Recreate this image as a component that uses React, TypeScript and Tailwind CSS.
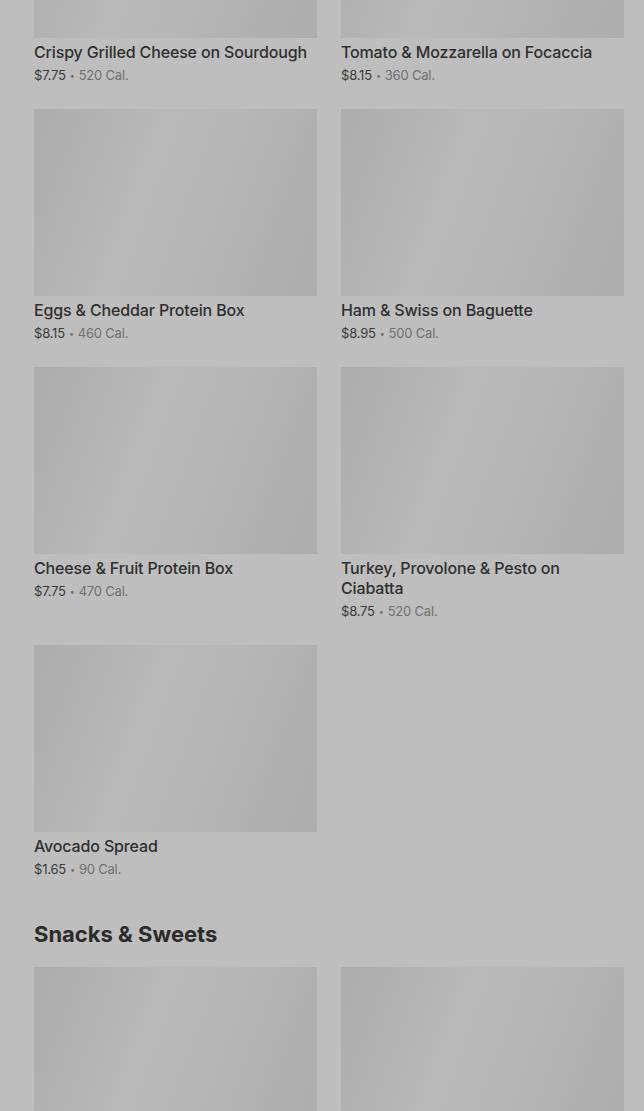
type Item = {
  name: string;
  price: string;
  cal: string;
};

const breakfast: Item[] = [
  { name: "Crispy Grilled Cheese on Sourdough", price: "$7.75", cal: "520 Cal." },
  { name: "Tomato & Mozzarella on Focaccia", price: "$8.15", cal: "360 Cal." },
  { name: "Eggs & Cheddar Protein Box", price: "$8.15", cal: "460 Cal." },
  { name: "Ham & Swiss on Baguette", price: "$8.95", cal: "500 Cal." },
  { name: "Cheese & Fruit Protein Box", price: "$7.75", cal: "470 Cal." },
  { name: "Turkey, Provolone & Pesto on Ciabatta", price: "$8.75", cal: "520 Cal." },
  { name: "Avocado Spread", price: "$1.65", cal: "90 Cal." },
];

const snacks: Item[] = [
  { name: "", price: "", cal: "" },
  { name: "", price: "", cal: "" },
];

// placeholder de imagen (skeleton)
function Placeholder() {
  return (
    <div className="h-[187px] w-full bg-[linear-gradient(110deg,#adadad_0%,#b2b2b2_20%,#b9b9b9_38%,#b7b7b7_58%,#b0b0b0_82%,#adadad_100%)]" />
  );
}

function Card({ item }: { item: Item }) {
  return (
    <div className="flex flex-col">
      <Placeholder />
      {item.name && (
        <>
          <p className="mt-1 text-[16px] leading-5 font-medium tracking-[-0.15px] text-[#2f2f2f]">
            {item.name}
          </p>
          <p className="mt-[5px] flex h-4 items-center text-[13px] leading-4 tracking-[-0.2px] text-[#707070]">
            <span className="text-[#3a3a3a]">{item.price}</span>
            <span className="mx-[4px] text-[9px] leading-none">•</span>
            <span>{item.cal}</span>
          </p>
        </>
      )}
    </div>
  );
}

export default function App() {
  return (
    <div
      className="min-h-screen h-[1111px] overflow-hidden bg-[#bebebe] pl-[34px] pr-[20px]"
      style={{ fontFamily: "Inter, 'Noto Sans', sans-serif" }}
    >
      <div className="-mt-[149px] grid grid-cols-2 gap-x-6 gap-y-[26px]">
        {breakfast.map((item, i) => (
          <Card key={i} item={item} />
        ))}
      </div>

      <h2 className="mt-[41px] mb-[17px] text-[22px] leading-8 font-bold text-[#2b2b2b]">
        Snacks &amp; Sweets
      </h2>

      <div className="grid grid-cols-2 gap-x-6 gap-y-[26px]">
        {snacks.map((item, i) => (
          <Card key={i} item={item} />
        ))}
      </div>
    </div>
  );
}
